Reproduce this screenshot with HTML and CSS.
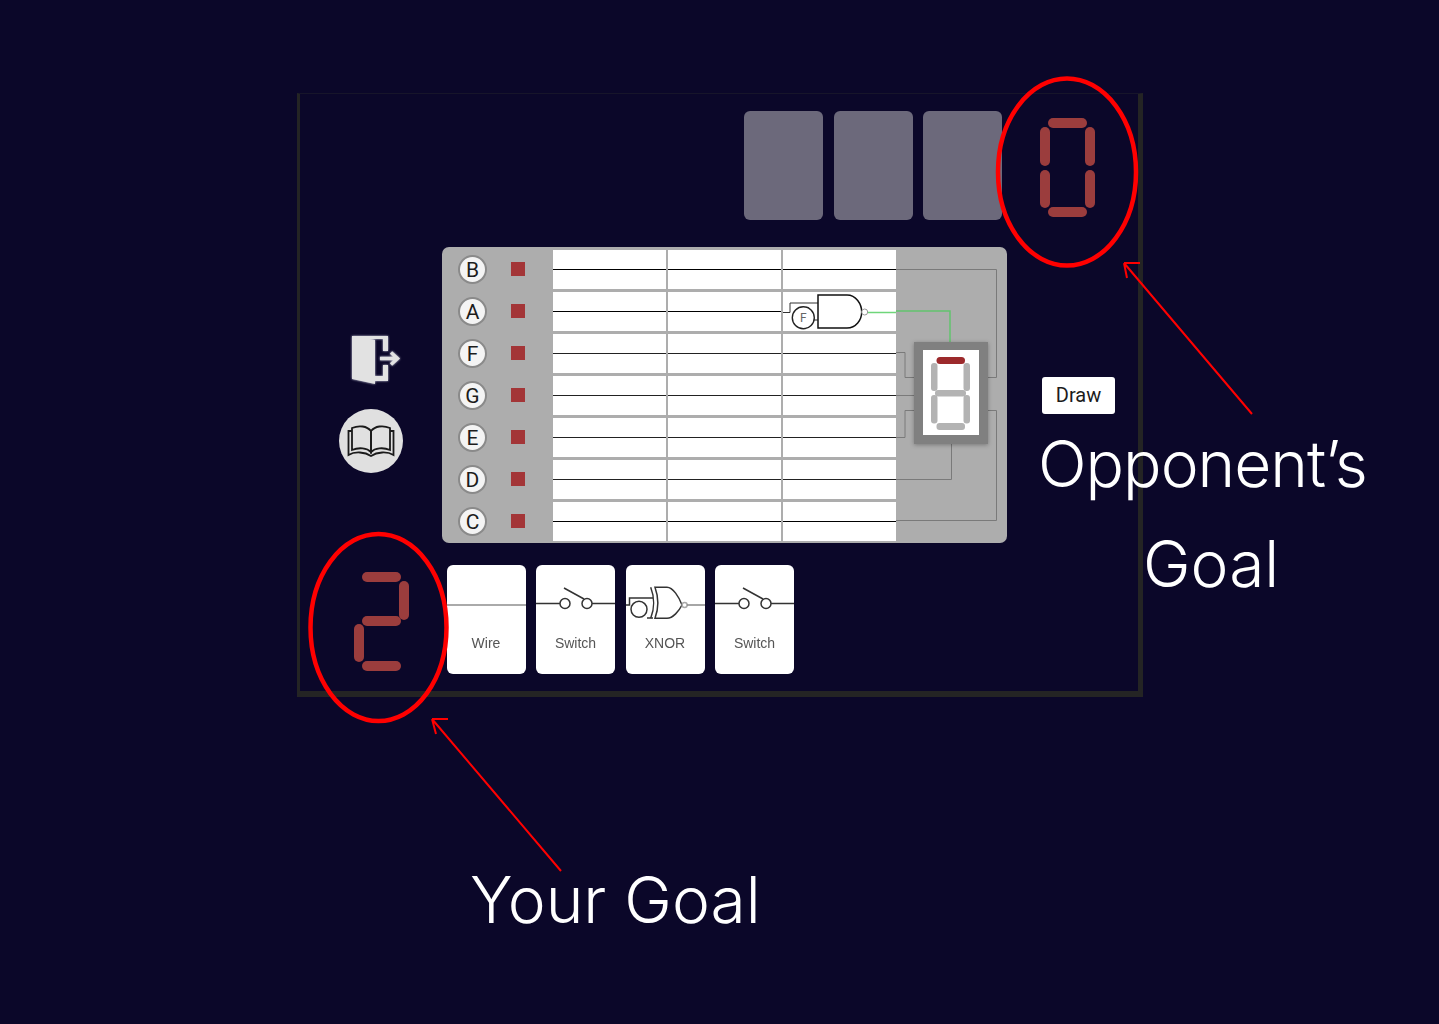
FILE: index.html
```html
<!DOCTYPE html>
<html lang="en">
<head>
<meta charset="utf-8">
<title>Circuit card game</title>
<link rel="stylesheet" href="styles.css">
</head>
<body>
<main class="frame">
  <div class="top-left"></div>
  <div class="opponent-hand">
    <div class="back-card"></div>
    <div class="back-card"></div>
    <div class="back-card"></div>
  </div>
  <div class="goal-top">
    <svg class="digit" viewBox="0 0 55 99" aria-label="0">
      <rect x="8" y="0" width="39" height="10" rx="5"/>
      <rect x="0" y="9" width="10" height="39" rx="5"/>
      <rect x="45" y="9" width="10" height="39" rx="5"/>
      <rect x="0" y="52" width="10" height="38" rx="5"/>
      <rect x="45" y="52" width="10" height="38" rx="5"/>
      <rect x="8" y="89" width="39" height="10" rx="5"/>
    </svg>
  </div>

  <div class="side-tools">
    <svg class="exit-icon" viewBox="351 334 50 50">
      <g fill="#e2e2e2">
        <path d="M352 335H388V350H383V338H352Z"/>
        <path d="M383 364H388V380H375V375H383Z"/>
        <path d="M352 335L375 339V383L352 378Z"/>
      </g>
      <path d="M380 357.500H396M391 351.500L397.500 357.500L391 363.500" fill="none" stroke="#e2e2e2" stroke-width="3.500"/>
    </svg>
    <div class="book-button">
      <svg viewBox="0 0 64 64" width="64" height="64" fill="none" stroke="#1a1a1a" stroke-width="1.800">
        <path d="M13 19C20 16 28 17 32 22V43C28 39 20 38 13 41Z"/>
        <path d="M51 19C44 16 36 17 32 22V43C36 39 44 38 51 41Z"/>
        <path d="M13 22H9.500V46C16 42 26 43 32 47C38 43 48 42 54.500 46V22H51"/>
      </svg>
    </div>
  </div>

  <section class="board">
    <div class="labels">
      <div class="label-row"><span class="pin">B</span><span class="led"></span></div>
      <div class="label-row"><span class="pin">A</span><span class="led"></span></div>
      <div class="label-row"><span class="pin">F</span><span class="led"></span></div>
      <div class="label-row"><span class="pin">G</span><span class="led"></span></div>
      <div class="label-row"><span class="pin">E</span><span class="led"></span></div>
      <div class="label-row"><span class="pin">D</span><span class="led"></span></div>
      <div class="label-row"><span class="pin">C</span><span class="led"></span></div>
    </div>
    <div class="slots">
      <div class="cell wire"></div><div class="cell wire"></div><div class="cell wire"></div>
      <div class="cell wire"></div><div class="cell wire"></div>
      <div class="cell">
        <svg class="gate" width="113" height="39">
          <path d="M0 20.500H7V11H35" fill="none" stroke="#333" stroke-width="1"/>
          <path d="M35 3H64C73 3 78.700 12 78.700 20C78.700 28 73 36 64 36H35Z" fill="#fff" stroke="#111" stroke-width="1.500"/>
          <circle cx="20.300" cy="25.700" r="11" fill="#fff" stroke="#222" stroke-width="1.400"/>
          <path d="M31 28H35" stroke="#222" stroke-width="1"/>
          <text class="gate-text" x="20.300" y="30">F</text>
          <circle cx="81.700" cy="20" r="3" fill="#fff" stroke="#999" stroke-width="1"/>
          <path d="M85 20.500H113" stroke="#6fd67a" stroke-width="1.500"/>
        </svg>
      </div>
      <div class="cell wire dim"></div><div class="cell wire dim"></div><div class="cell wire dim"></div>
      <div class="cell wire dim"></div><div class="cell wire dim"></div><div class="cell wire dim"></div>
      <div class="cell wire dim"></div><div class="cell wire dim"></div><div class="cell wire dim"></div>
      <div class="cell wire dim"></div><div class="cell wire dim"></div><div class="cell wire dim"></div>
      <div class="cell wire"></div><div class="cell wire"></div><div class="cell wire"></div>
    </div>
    <svg class="output" viewBox="896 250 111 290" width="111" height="290">
      <g fill="none" stroke="#7a7a7a" stroke-width="1">
        <path d="M896 269.500H996.500V377.500H988"/>
        <path d="M896 352.500H905V377.500H914"/>
        <path d="M896 395.500H914"/>
        <path d="M896 437.500H905V410.500H914"/>
        <path d="M896 479.500H951.500V444"/>
        <path d="M896 520.500H996.500V410.500H988"/>
      </g>
      <path d="M896 311H950V342" fill="none" stroke="#62c46e" stroke-width="1.500"/>
      <rect class="display-box" x="914" y="342" width="74" height="102" fill="#808080"/>
      <rect x="923" y="350" width="56" height="85" fill="#fff"/>
      <g fill="#b3b3b3">
        <rect x="931" y="363" width="6.500" height="28" rx="3"/>
        <rect x="963.500" y="363" width="6.500" height="28" rx="3"/>
        <rect x="931" y="395" width="6.500" height="28.500" rx="3"/>
        <rect x="963.500" y="395" width="6.500" height="28.500" rx="3"/>
        <rect x="935" y="390" width="31" height="6.500" rx="3"/>
        <rect x="936.500" y="423" width="28.500" height="7" rx="3"/>
      </g>
      <rect x="936.500" y="357" width="28.500" height="7" rx="3.500" fill="#9c2a2c"/>
    </svg>
  </section>

  <div class="draw-col"><button class="draw">Draw</button></div>

  <div class="goal-bottom">
    <svg class="digit" viewBox="0 0 55 99" aria-label="2">
      <rect x="8" y="0" width="39" height="10" rx="5"/>
      <rect x="45" y="9" width="10" height="39" rx="5"/>
      <rect x="8" y="44" width="39" height="10" rx="5"/>
      <rect x="0" y="52" width="10" height="38" rx="5"/>
      <rect x="8" y="89" width="39" height="10" rx="5"/>
    </svg>
  </div>

  <div class="hand">
    <div class="card">
      <svg class="card-art" width="79" height="60">
        <path d="M0 40H79" stroke="#aaa" stroke-width="2"/>
      </svg>
      <span class="card-name">Wire</span>
    </div>
    <div class="card">
      <svg class="card-art" width="79" height="60" fill="none" stroke="#333" stroke-width="1.500">
        <path d="M0 38.500H24M56 38.500H79M28 23L48 34"/>
        <circle cx="29" cy="38.500" r="5"/>
        <circle cx="51" cy="38.500" r="5"/>
      </svg>
      <span class="card-name">Switch</span>
    </div>
    <div class="card">
      <svg class="card-art" width="79" height="60" fill="none" stroke="#333" stroke-width="1.500">
        <path d="M0 40H3.500V33H27"/>
        <circle cx="13" cy="44.300" r="8"/>
        <path d="M21 53H27"/>
        <path d="M29 22.300H41C47 22.300 53 32 56 40C53 46 47 53.300 41 53.300H29C32.500 44 32.500 32 29 22.300Z" fill="#fff"/>
        <path d="M24.700 22.300C28.500 32 28.500 44 24.700 53.300"/>
        <circle cx="58.600" cy="40" r="2.500" stroke="#aaa"/>
        <path d="M61 40H79" stroke="#888"/>
      </svg>
      <span class="card-name">XNOR</span>
    </div>
    <div class="card">
      <svg class="card-art" width="79" height="60" fill="none" stroke="#333" stroke-width="1.500">
        <path d="M0 38.500H24M56 38.500H79M28 23L48 34"/>
        <circle cx="29" cy="38.500" r="5"/>
        <circle cx="51" cy="38.500" r="5"/>
      </svg>
      <span class="card-name">Switch</span>
    </div>
  </div>
  <div class="bottom-right"></div>
</main>

<svg class="markup" viewBox="0 0 1439 1024" width="1439" height="1024" fill="none" stroke="#ff0000">
  <ellipse cx="1067" cy="172" rx="69" ry="93.500" stroke-width="4.500"/>
  <ellipse cx="378.500" cy="627.500" rx="68" ry="93.500" stroke-width="4.500"/>
  <path d="M1252 414L1124 263M1124 263H1140M1124 263L1127 278" stroke-width="2"/>
  <path d="M561 871L432 719M432 719H448M432 719L436 734" stroke-width="2"/>
</svg>
<p class="note note-opponent">Opponent’s</p>
<p class="note note-goal">Goal</p>
<p class="note note-yours">Your Goal</p>
</body>
</html>
```
FILE: styles.css
```css
* {
  box-sizing: border-box;
}

html,
body {
  margin: 0;
  height: 1024px;
  overflow: hidden;
  background: #0b0729;
}

body {
  position: relative;
  font-family: "Liberation Sans", Arial, sans-serif;
}

.frame {
  display: grid;
  grid-template-columns: 142px 565px 131px;
  grid-template-rows: 153px 296px 148px;
  width: 846px;
  height: 604px;
  margin: 93px 0 0 297px;
  border-style: solid;
  border-color: #242424;
  border-width: 1px 5px 6px 3px;
  border-top-color: #17152a;
  filter: blur(0.4px);
}

.opponent-hand {
  display: flex;
  justify-content: flex-end;
  gap: 10.500px;
  padding: 17px 5px 0 0;
}

.back-card {
  width: 79px;
  height: 109px;
  border-radius: 6px;
  background: #6c697b;
}

.goal-top {
  padding: 24px 0 0 33px;
}

.digit {
  display: block;
  width: 55px;
  height: 99px;
  fill: #9b3d3d;
}

.side-tools {
  display: flex;
  flex-direction: column;
  padding: 88px 0 0 39px;
}

.exit-icon {
  display: block;
  width: 50px;
  height: 50px;
  margin-left: 12px;
  filter: drop-shadow(0 0 1px #cfcfe0);
}

.book-button {
  width: 64px;
  height: 64px;
  margin-top: 24px;
  border-radius: 50%;
  background: #e0e0e0;
}

.book-button svg {
  display: block;
}

.board {
  display: grid;
  grid-template-columns: 111px 343px 111px;
  padding: 3px 0;
  border-radius: 7px;
  background: #adadad;
}

.labels,
.slots {
  display: grid;
  grid-template-rows: repeat(7, 1fr);
  row-gap: 3px;
}

.label-row {
  display: flex;
  align-items: center;
  gap: 24px;
  padding-left: 16px;
}

.pin {
  display: flex;
  align-items: center;
  justify-content: center;
  width: 29px;
  height: 29px;
  border: 2px solid #8a8a8a;
  border-radius: 50%;
  background: #f4f4f4;
  color: #1c1c1c;
  font: 400 21px Roboto, sans-serif;
}

.led {
  width: 14px;
  height: 14px;
  margin-top: -2px;
  background: #a33537;
}

.slots {
  grid-template-columns: repeat(3, 1fr);
  column-gap: 2.500px;
}

.cell {
  position: relative;
  background: #fff;
}

.wire::after {
  content: "";
  position: absolute;
  left: 0;
  right: 0;
  top: 19px;
  height: 1px;
  background: #000;
}

.dim::after {
  background: #222;
}

.gate {
  display: block;
  overflow: visible;
}

.gate-text {
  fill: #666;
  stroke: none;
  font: 400 12px Roboto, sans-serif;
  text-anchor: middle;
}

.output {
  display: block;
}

.display-box {
  filter: drop-shadow(0 1px 2px rgba(0, 0, 0, 0.3));
}

.draw-col {
  display: flex;
  align-items: center;
  padding-left: 35px;
}

.draw {
  width: 73px;
  height: 37px;
  padding: 0;
  border: 0;
  border-radius: 3px;
  background: #fff;
  color: #1c1c1c;
  font: 400 20px Roboto, sans-serif;
}

.goal-bottom {
  padding: 29px 0 0 54px;
}

.hand {
  display: flex;
  gap: 10.500px;
  padding: 22px 0 0 4.500px;
}

.card {
  display: flex;
  flex-direction: column;
  align-items: center;
  width: 79px;
  height: 109px;
  border-radius: 6px;
  background: #fff;
}

.card-art {
  display: block;
  flex: none;
}

.card-name {
  margin-top: 10px;
  color: #555;
  font-size: 14px;
  line-height: 16px;
}

.markup {
  position: absolute;
  left: 0;
  top: 0;
  pointer-events: none;
}

.note {
  position: absolute;
  margin: 0;
  color: #fff;
  font: 300 64px/80px Inter, sans-serif;
  white-space: nowrap;
}

.note-opponent {
  left: 1038px;
  top: 424px;
  letter-spacing: -1px;
}

.note-goal {
  left: 1143px;
  top: 524px;
}

.note-yours {
  left: 470px;
  top: 860px;
}
```
